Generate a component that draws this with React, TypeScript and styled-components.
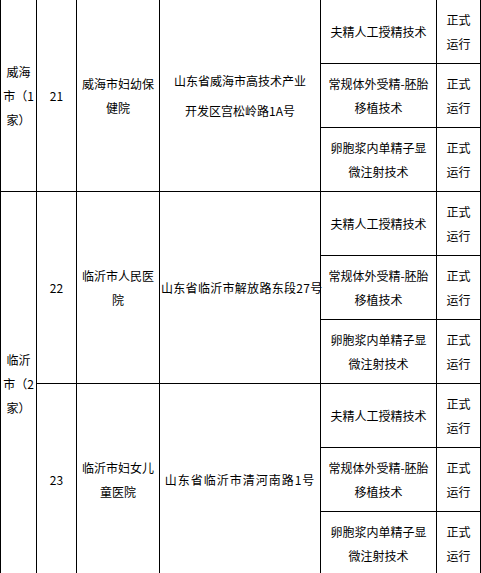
import React from "react";
import styled, { createGlobalStyle } from "styled-components";

const GlobalStyle = createGlobalStyle`
  html, body {
    margin: 0;
    padding: 0;
    background: #fff;
  }
  body {
    font-family: "Noto Sans CJK SC", "Liberation Sans", sans-serif;
    color: #000;
  }
`;

const Page = styled.div`
  overflow: hidden;
  width: 481px;
`;

const Table = styled.table`
  border-collapse: collapse;
  table-layout: fixed;
  width: 480px;
  margin-top: -1px;
  font-size: 12px;
`;

const Col = styled.col<{ $w: number }>`
  width: ${(p) => p.$w}px;
`;

const Row = styled.tr`
  height: 64px;
`;

const Cell = styled.td<{ $pad?: number; $lh?: number; $spacing?: number; $nowrap?: boolean }>`
  border: 1px solid #000;
  padding: 0 ${(p) => p.$pad ?? 4}px;
  text-align: center;
  vertical-align: middle;
  line-height: ${(p) => p.$lh ?? 24}px;
  letter-spacing: ${(p) => p.$spacing ?? 0}px;
  white-space: ${(p) => (p.$nowrap ? "nowrap" : "normal")};
  word-break: break-all;
`;

const Line = styled.div`
  display: block;
`;

interface Hospital {
  no: number;
  name: string;
  address: string[];
  spacing?: number;
  lh?: number;
}

interface City {
  region: string;
  hospitals: Hospital[];
}

const widths = [36, 40, 83, 161, 116, 44];

const techs = ["夫精人工授精技术", "常规体外受精-胚胎移植技术", "卵胞浆内单精子显微注射技术"];

const cities: City[] = [
  {
    region: "威海市（1家）",
    hospitals: [
      {
        no: 21,
        name: "威海市妇幼保健院",
        address: ["山东省威海市高技术产业", "开发区宫松岭路1A号"],
        lh: 30,
      },
    ],
  },
  {
    region: "临沂市（2家）",
    hospitals: [
      { no: 22, name: "临沂市人民医院", address: ["山东省临沂市解放路东段27号"], spacing: 0.3 },
      { no: 23, name: "临沂市妇女儿童医院", address: ["山东省临沂市清河南路1号"], spacing: 1 },
    ],
  },
];

export default function App() {
  return (
    <Page>
      <GlobalStyle />
      <Table>
        <colgroup>
          {widths.map((w, i) => (
            <Col key={i} $w={w} />
          ))}
        </colgroup>
        <tbody>
          {cities.map((city) =>
            city.hospitals.map((h, hi) =>
              techs.map((t, ti) => (
                <Row key={`${h.no}-${ti}`}>
                  {hi === 0 && ti === 0 && (
                    <Cell rowSpan={city.hospitals.length * techs.length} $pad={2}>
                      {city.region}
                    </Cell>
                  )}
                  {ti === 0 && (
                    <>
                      <Cell rowSpan={techs.length}>{h.no}</Cell>
                      <Cell rowSpan={techs.length}>{h.name}</Cell>
                      <Cell rowSpan={techs.length} $pad={1} $nowrap $spacing={h.spacing} $lh={h.lh}>
                        {h.address.map((a) => (
                          <Line key={a}>{a}</Line>
                        ))}
                      </Cell>
                    </>
                  )}
                  <Cell>{t}</Cell>
                  <Cell $pad={5}>正式运行</Cell>
                </Row>
              ))
            )
          )}
        </tbody>
      </Table>
    </Page>
  );
}
